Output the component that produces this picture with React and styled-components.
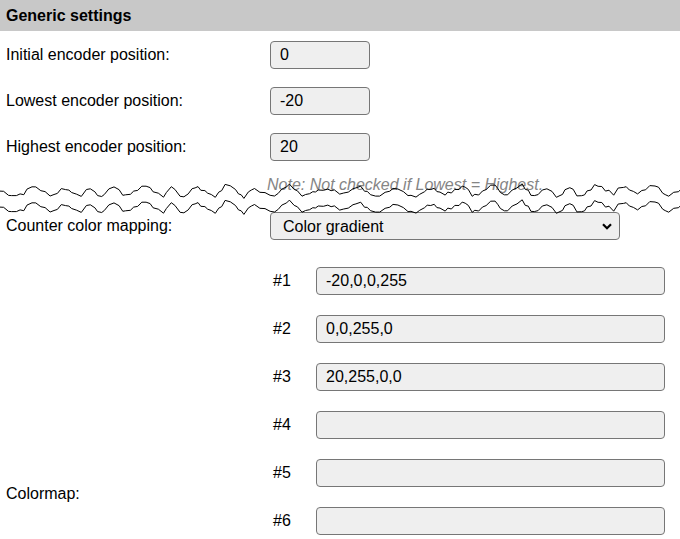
import React from "react";
import styled, { createGlobalStyle } from "styled-components";

const GlobalStyle = createGlobalStyle`
  html, body {
    margin: 0;
    padding: 0;
    overflow: hidden;
    background: #fff;
  }
  body {
    font-family: "Liberation Sans", Arial, sans-serif;
    font-size: 16px;
    color: #000;
  }
`;

const Header = styled.div`
  height: 31px;
  line-height: 32px;
  padding: 0 6px;
  background: #c8c8c8;
  font-weight: bold;
`;

const Form = styled.div`
  display: flex;
  flex-direction: column;
  padding-top: 10px;
`;

const Row = styled.div`
  display: grid;
  grid-template-columns: 264px 1fr;
  align-items: center;
  padding-left: 6px;
  margin-bottom: ${(p) => p.$gap ?? 18}px;
`;

const Label = styled.div`
  line-height: 18px;
`;

const Field = styled.input`
  box-sizing: border-box;
  width: ${(p) => p.$width}px;
  height: 28px;
  margin: 0;
  padding: 0 9px;
  border: 1px solid #767676;
  border-radius: 4px;
  background: #efefef;
  font-family: inherit;
  font-size: 16px;
  color: #000;
  outline: none;
`;

const Note = styled.div`
  grid-column: 2;
  margin-left: -3px;
  line-height: 18px;
  font-style: italic;
  color: #858585;
`;

const TornArea = styled.div`
  position: relative;
`;

const Tear = styled.svg`
  position: absolute;
  left: 0;
  top: 0;
  pointer-events: none;
`;

const SelectBox = styled.div`
  position: relative;
  width: 350px;
  height: 28px;
`;

const Select = styled.select`
  box-sizing: border-box;
  width: 100%;
  height: 100%;
  margin: 0;
  padding: 0 30px 0 12px;
  appearance: none;
  border: 1px solid #767676;
  border-radius: 4px;
  background: #efefef;
  font-family: inherit;
  font-size: 16px;
  color: #000;
`;

const Chevron = styled.svg`
  position: absolute;
  right: 8px;
  top: 11px;
  pointer-events: none;
`;

const ColormapSection = styled.div`
  display: grid;
  grid-template-columns: 264px 1fr;
  padding-left: 6px;
`;

const ColormapLabel = styled(Label)`
  align-self: end;
  margin-bottom: 42px;
`;

const MapRows = styled.div`
  display: flex;
  flex-direction: column;
`;

const MapRow = styled.div`
  display: grid;
  grid-template-columns: 46px 349px;
  align-items: center;
  height: 48px;
`;

const Index = styled.div`
  padding-left: 3px;
`;

// torn-paper edge: sharp humps with small teeth on them
function makeWave(seed) {
  let s = seed;
  const rnd = () => {
    s = (s * 16807) % 2147483647;
    return (s - 1) / 2147483646;
  };
  const pts = [];
  let x = 0;
  let from = 0;
  let to = 5;
  let up = false;
  let segStart = 0;
  let segLen = 10;
  let tooth = 1;
  while (x <= 700) {
    if (x - segStart > segLen) {
      segStart = x;
      segLen = 7 + rnd() * 12;
      from = to;
      to = (up ? -1 : 1) * (2 + rnd() * 4.5);
      up = !up;
    }
    const t = Math.min(1, (x - segStart) / segLen);
    const base = from + (to - from) * t;
    pts.push([x, base + tooth * rnd() * 1.6]);
    tooth = -tooth;
    x += 2.5 + rnd() * 3;
  }
  return pts;
}

const WAVE = makeWave(4321);
const line = (off) => WAVE.map(([x, y]) => `${x.toFixed(1)},${(y + off).toFixed(1)}`).join(" ");

const colormap = ["-20,0,0,255", "0,0,255,0", "20,255,0,0", "", "", ""];

export default function App() {
  return (
    <>
      <GlobalStyle />
      <Header>Generic settings</Header>
      <Form>
        <Row>
          <Label>Initial encoder position:</Label>
          <Field $width={100} readOnly value="0" />
        </Row>
        <Row>
          <Label>Lowest encoder position:</Label>
          <Field $width={100} readOnly value="-20" />
        </Row>
        <Row $gap={15}>
          <Label>Highest encoder position:</Label>
          <Field $width={100} readOnly value="20" />
        </Row>
        <TornArea>
          <Row>
            <Note>Note: Not checked if Lowest = Highest.</Note>
          </Row>
          <Row $gap={17}>
            <Label>Counter color mapping:</Label>
            <SelectBox>
              <Select defaultValue="gradient">
                <option value="gradient">Color gradient</option>
                <option value="fixed">Fixed colors</option>
              </Select>
              <Chevron width="10" height="7" viewBox="0 0 10 7">
                <path d="M1 1.2 L5 5.2 L9 1.2" fill="none" stroke="#000" strokeWidth="2.2" />
              </Chevron>
            </SelectBox>
          </Row>
          <Tear width="680" height="42" viewBox="0 0 680 42">
            <polyline points={line(15)} fill="none" stroke="#000" strokeWidth="1" />
            <polyline points={line(31)} fill="none" stroke="#000" strokeWidth="1" />
          </Tear>
        </TornArea>
        <ColormapSection>
          <ColormapLabel>Colormap:</ColormapLabel>
          <MapRows>
            {colormap.map((v, i) => (
              <MapRow key={i}>
                <Index>#{i + 1}</Index>
                <Field $width={349} readOnly value={v} />
              </MapRow>
            ))}
          </MapRows>
        </ColormapSection>
      </Form>
    </>
  );
}
